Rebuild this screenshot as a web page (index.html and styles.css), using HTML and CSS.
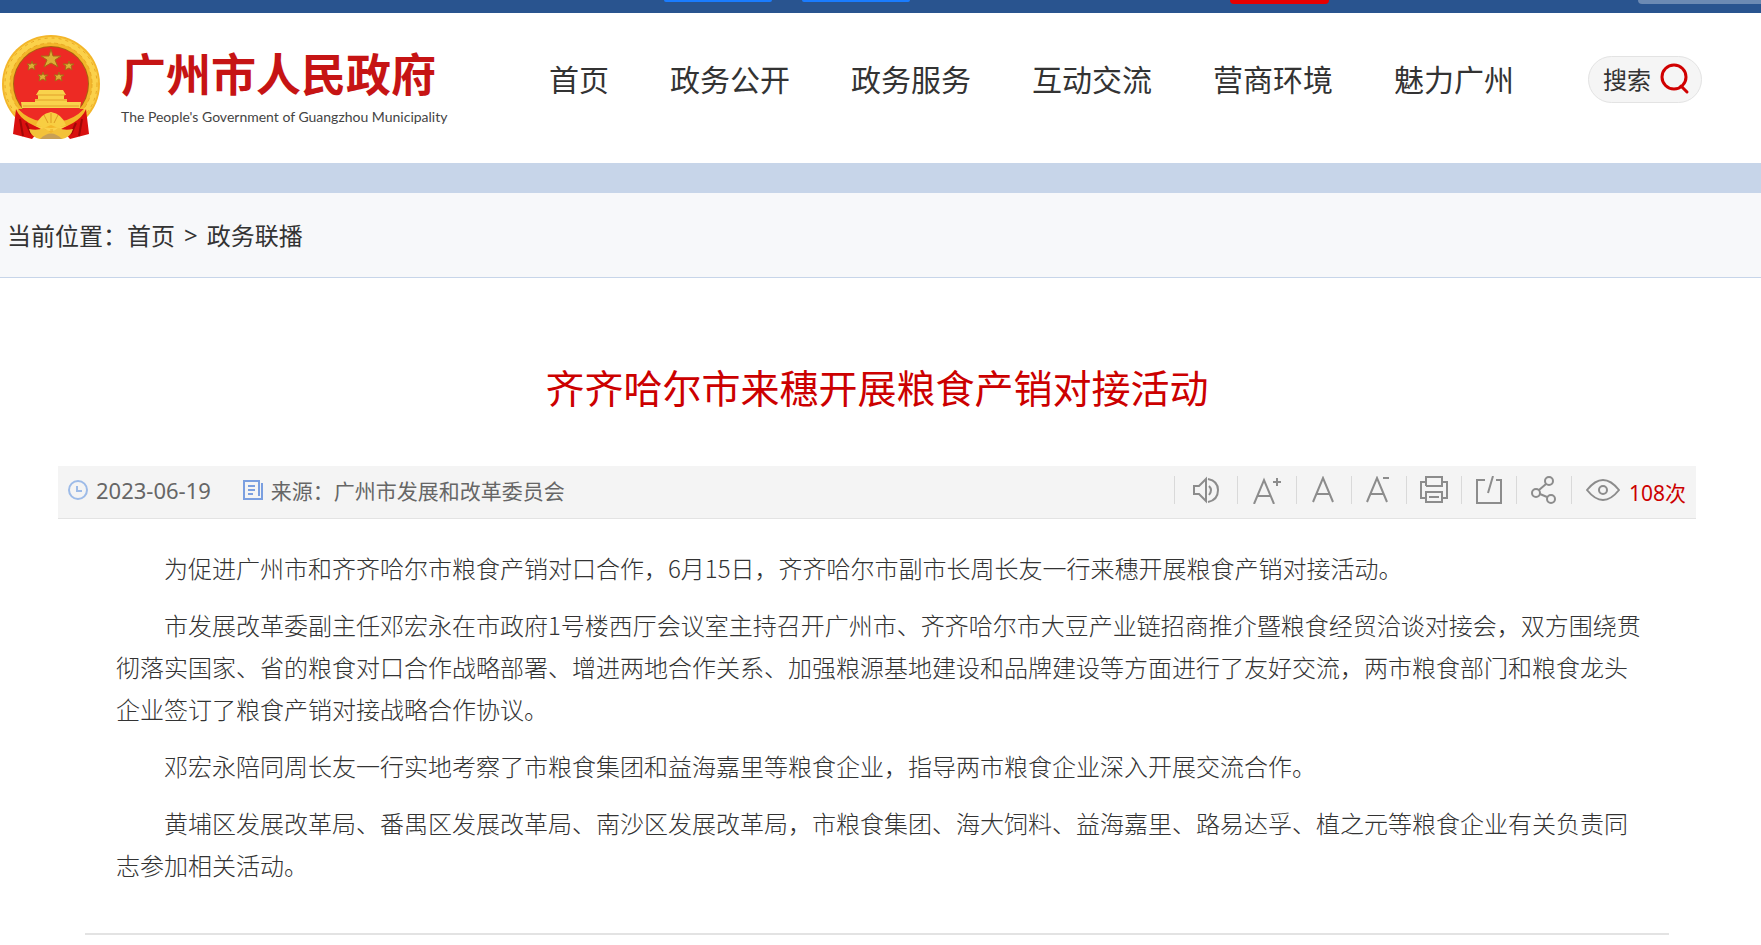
FILE: index.html
```html
<!DOCTYPE html>
<html lang="zh-CN">
<head>
<meta charset="UTF-8">
<meta name="viewport" content="width=device-width, initial-scale=1.0">
<title>齐齐哈尔市来穗开展粮食产销对接活动</title>
<link rel="stylesheet" href="styles.css">
</head>
<body>
  <div class="topbar">
    <span class="tab tab-blue"></span>
    <span class="tab tab-blue"></span>
    <span class="tab tab-red"></span>
    <span class="tab tab-light"></span>
  </div>

  <header class="header">
    <a class="logo" href="#">
      <svg class="emblem" viewBox="0 0 100 106" width="100" height="106" aria-hidden="true">
        <circle cx="50" cy="49" r="49" fill="#f3b62a"/>
        <circle cx="50" cy="49" r="44" fill="none" stroke="#fbd14a" stroke-width="6"/>
        <circle cx="50" cy="49" r="46" fill="none" stroke="#e9a824" stroke-width="1" stroke-dasharray="3 4"/>
        <circle cx="50" cy="49" r="41" fill="none" stroke="#e9a824" stroke-width="1" stroke-dasharray="4 3"/>
        <circle cx="50" cy="49" r="38" fill="#a8620f"/>
        <circle cx="50" cy="49" r="37" fill="#ed2a24"/>
        <g fill="#dcae35" stroke="#a86a14" stroke-width="1">
          <path d="M50 14 L52 21 L60 21 L54 25 L57 32 L50 28 L43 32 L46 25 L40 21 L48 21 Z"/>
          <path d="M31 26 L32 29 L36 29 L33 31 L34 35 L31 33 L27 35 L28 31 L26 29 L30 29 Z"/>
          <path d="M68 26 L69 29 L73 29 L70 31 L71 35 L68 33 L64 35 L65 31 L62 29 L67 29 Z"/>
          <path d="M42 37 L43 40 L47 40 L44 42 L45 46 L42 44 L38 46 L39 42 L37 40 L41 40 Z"/>
          <path d="M58 37 L59 40 L63 40 L60 42 L61 46 L58 44 L54 46 L55 42 L53 40 L57 40 Z"/>
        </g>
        <path d="M38 55 H62 L65 60 H35 Z M37 60 H63 V64 H37 Z M34 64 H66 V67 H80 L79 73 H21 L20 67 H34 Z" fill="#f9d24c"/>
        <path d="M36 60 H64 M34 65 H66 M22 71 H78" fill="none" stroke="#e2a02a" stroke-width="1"/>
        <path d="M17 74 H83 L76 82 Q50 100 24 82 Z" fill="#ed2a24"/>
        <path d="M17 74 Q27 84 39 86 L61 86 Q73 84 83 74 L85 80 Q73 92 50 93 Q27 92 15 80 Z" fill="#f3b62a"/>
        <path d="M15 74 Q18 82 28 88 L40 94 L31 104 L12 99 Z M85 74 Q82 82 72 88 L60 94 L69 104 L88 99 Z" fill="#d9100f"/>
        <path d="M19 84 L22 101 M81 84 L78 101 M25 88 L30 99 M75 88 L70 99" fill="none" stroke="#a00808" stroke-width="2"/>
        <path d="M35 90 Q39 79 50 77 Q61 79 65 90 L57 93 L50 90 L43 93 Z" fill="#f8ce42"/>
        <path d="M43 80 L47 88 M50 78 V88 M57 80 L53 88" fill="none" stroke="#dd9a22" stroke-width="1"/>
        <path d="M28 94 Q36 96 43 93 L50 98 L57 93 Q64 96 72 94 Q70 102 61 104 H39 Q30 102 28 94 Z" fill="#f3c23a"/>
        <path d="M39 104 Q50 93 61 104 Z" fill="#c9a055"/>
      </svg>
      <span class="logo-text">
        <span class="logo-cn">广州市人民政府</span>
        <span class="logo-en">The People's Government of Guangzhou Municipality</span>
      </span>
    </a>
    <nav class="nav">
      <a href="#">首页</a>
      <a href="#">政务公开</a>
      <a href="#">政务服务</a>
      <a href="#">互动交流</a>
      <a href="#">营商环境</a>
      <a href="#">魅力广州</a>
    </nav>
    <button class="search" type="button">搜索
      <svg viewBox="0 0 32 32" width="32" height="32" fill="none" stroke="#d00000" stroke-width="3" stroke-linecap="round" aria-hidden="true"><circle cx="15" cy="14" r="12"/><path d="M22 23 L28 29"/></svg>
    </button>
  </header>

  <div class="strip"></div>

  <div class="crumbs">
    <span>当前位置：</span><a href="#">首页</a><span class="sep">&gt;</span><a href="#">政务联播</a>
  </div>

  <main class="article">
    <h1>齐齐哈尔市来穗开展粮食产销对接活动</h1>

    <div class="meta">
      <svg viewBox="0 0 20 20" width="20" height="20" fill="none" stroke="#9dbbe8" stroke-width="2" aria-hidden="true"><circle cx="10" cy="10" r="9"/><path d="M9 6 V11 H14"/></svg>
      <time class="date" datetime="2023-06-19">2023-06-19</time>
      <svg viewBox="0 0 20 20" width="20" height="20" fill="none" stroke="#7a9fe0" stroke-width="2" aria-hidden="true"><path d="M16 16 V1 H1 V19 H19 V3"/><path d="M5 6 H12 M5 10 H12 M5 14 H10"/></svg>
      <span class="source">来源：广州市发展和改革委员会</span>

      <div class="tools">
        <button class="tool-voice" type="button" aria-label="朗读"><svg viewBox="0 0 28 28" width="28" height="28"><path d="M2 10 H7 L14 3 V25 L7 18 H2 Z M17 10 Q21 14 17 19 M16 3 Q26 5 26 14 Q26 24 16 26"/></svg></button>
        <button class="tool-larger" type="button" aria-label="放大字体"><svg viewBox="0 0 28 28" width="28" height="28"><path d="M1 28 L11 4 L21 28 M5 20 H17 M20 6 H28 M24 2 V10"/></svg></button>
        <button type="button" aria-label="默认字体"><svg viewBox="0 0 28 28" width="28" height="28"><path d="M3 26 L13 2 L23 26 M7 18 H19"/></svg></button>
        <button type="button" aria-label="缩小字体"><svg viewBox="0 0 28 28" width="28" height="28"><path d="M2 26 L12 2 L22 26 M6 18 H18 M18 2 H24"/></svg></button>
        <button type="button" aria-label="打印"><svg viewBox="0 0 28 28" width="28" height="28"><path d="M6 10 V1 H22 V10 H6 M6 22 H1 V6 H6 M22 6 H27 V22 H22 M6 16 H22 V26 H6 Z M9 21 H19"/></svg></button>
        <button type="button" aria-label="打开"><svg viewBox="0 0 28 28" width="28" height="28"><path d="M10 4 H2 V27 H26 V4 H21 M13 17 L18 0"/></svg></button>
        <button type="button" aria-label="分享"><svg viewBox="0 0 28 28" width="28" height="28"><circle cx="19" cy="5" r="4"/><circle cx="6" cy="17" r="4"/><circle cx="21" cy="23" r="4"/><path d="M16 8 L9 14 M10 18 L17 21"/></svg></button>
        <span class="views"><svg viewBox="0 0 34 28" width="34" height="28"><path d="M1 14 Q17 -6 33 14 Q17 34 1 14 Z"/><circle cx="17" cy="14" r="4"/></svg><span class="count">108次</span></span>
      </div>
    </div>

    <div class="content">
      <p>为促进广州市和齐齐哈尔市粮食产销对口合作，6月15日，齐齐哈尔市副市长周长友一行来穗开展粮食产销对接活动。</p>
      <p>市发展改革委副主任邓宏永在市政府1号楼西厅会议室主持召开广州市、齐齐哈尔市大豆产业链招商推介暨粮食经贸洽谈对接会，双方围绕贯彻落实国家、省的粮食对口合作战略部署、增进两地合作关系、加强粮源基地建设和品牌建设等方面进行了友好交流，两市粮食部门和粮食龙头企业签订了粮食产销对接战略合作协议。</p>
      <p>邓宏永陪同周长友一行实地考察了市粮食集团和益海嘉里等粮食企业，指导两市粮食企业深入开展交流合作。</p>
      <p>黄埔区发展改革局、番禺区发展改革局、南沙区发展改革局，市粮食集团、海大饲料、益海嘉里、路易达孚、植之元等粮食企业有关负责同志参加相关活动。</p>
    </div>
  </main>
</body>
</html>
```

FILE: styles.css
```css
* {
  box-sizing: border-box;
}
body {
  margin: 0;
  font-family: "Noto Sans", "Noto Sans CJK SC", sans-serif;
  color: #333;
  background: #fff;
}
a {
  color: inherit;
  text-decoration: none;
}
button {
  font-family: inherit;
  color: inherit;
  cursor: pointer;
}

/* top bar */
.topbar {
  display: flex;
  align-items: flex-start;
  height: 13px;
  padding-left: 664px;
  background: #29548f;
}
.tab {
  width: 108px;
  height: 2px;
  margin-right: 30px;
  border-radius: 0 0 4px 4px;
}
.tab-blue {
  background: #1a7cff;
}
.tab-red {
  width: 99px;
  height: 4px;
  margin-left: 290px;
  background: #e60000;
}
.tab-light {
  width: 123px;
  height: 4px;
  margin: 0 0 0 auto;
  border-radius: 0 0 0 4px;
  background: #6c8ab3;
}

/* header */
.header {
  display: flex;
  align-items: flex-start;
  height: 150px;
  padding-right: 59px;
}
.logo {
  display: flex;
  gap: 20px;
  padding: 22px 0 0 1px;
}
.logo-text {
  display: flex;
  flex-direction: column;
  padding-top: 14px;
}
.logo-cn {
  font-size: 45px;
  line-height: 52px;
  font-weight: 700;
  color: #c61414;
}
.logo-en {
  font-family: Lato, sans-serif;
  font-size: 14px;
  line-height: 32px;
  color: #444;
  white-space: nowrap;
}
.nav {
  display: flex;
  gap: 61px;
  margin: 43px 0 0 auto;
  font-size: 30px;
  line-height: 48px;
  white-space: nowrap;
}
.search {
  display: flex;
  align-items: center;
  gap: 8px;
  height: 47px;
  margin: 43px 0 0 74px;
  padding: 0 10px 2px 14px;
  border: 1px solid #e3e3e3;
  border-radius: 24px;
  background: #f5f5f5;
  font-size: 24px;
  white-space: nowrap;
}
.strip {
  height: 30px;
  background: #c7d5e9;
}

/* breadcrumb */
.crumbs {
  display: flex;
  align-items: center;
  height: 85px;
  padding: 0 0 2px 7px;
  border-bottom: 1px solid #c7d5e9;
  background: #f7f8fa;
  font-size: 24px;
}
.sep {
  margin: 0 9px;
}

/* article */
.article {
  padding: 0 65px 0 58px;
}
h1 {
  margin: 80px 0 48px;
  font-size: 39px;
  line-height: 60px;
  font-weight: 400;
  text-align: center;
  color: #c00;
}
.meta {
  display: flex;
  align-items: center;
  height: 53px;
  padding: 0 10px 4px;
  border-bottom: 1px solid #e3e3e3;
  background: #f4f4f4;
  font-size: 21px;
  color: #666;
}
.date {
  margin: 0 32px 0 8px;
  font-size: 22px;
}
.source {
  margin-left: 8px;
}
.tools {
  display: flex;
  align-items: center;
  margin-left: auto;
}
.tools svg {
  display: block;
  fill: none;
  stroke: #8c8c8c;
  stroke-width: 2;
}
.tools button {
  padding: 0 13px;
  border: 0;
  border-left: 1px solid #d9d9d9;
  background: none;
}
.tools .tool-voice {
  padding: 0 17px;
}
.tools .tool-larger {
  padding: 0 15px;
}
.views {
  display: flex;
  gap: 9px;
  height: 28px;
  padding-left: 14px;
  border-left: 1px solid #d9d9d9;
  color: #c00;
}
.count {
  line-height: 34px;
}
.content {
  margin: 0 27px;
  padding: 28px 22px 32px 31px;
  border-bottom: 2px solid #e3e3e3;
  font-family: "Noto Sans CJK SC", sans-serif;
  font-size: 24px;
  line-height: 42px;
  font-weight: 300;
}
.content p {
  margin: 0 0 15px;
  text-indent: 2em;
}
```
